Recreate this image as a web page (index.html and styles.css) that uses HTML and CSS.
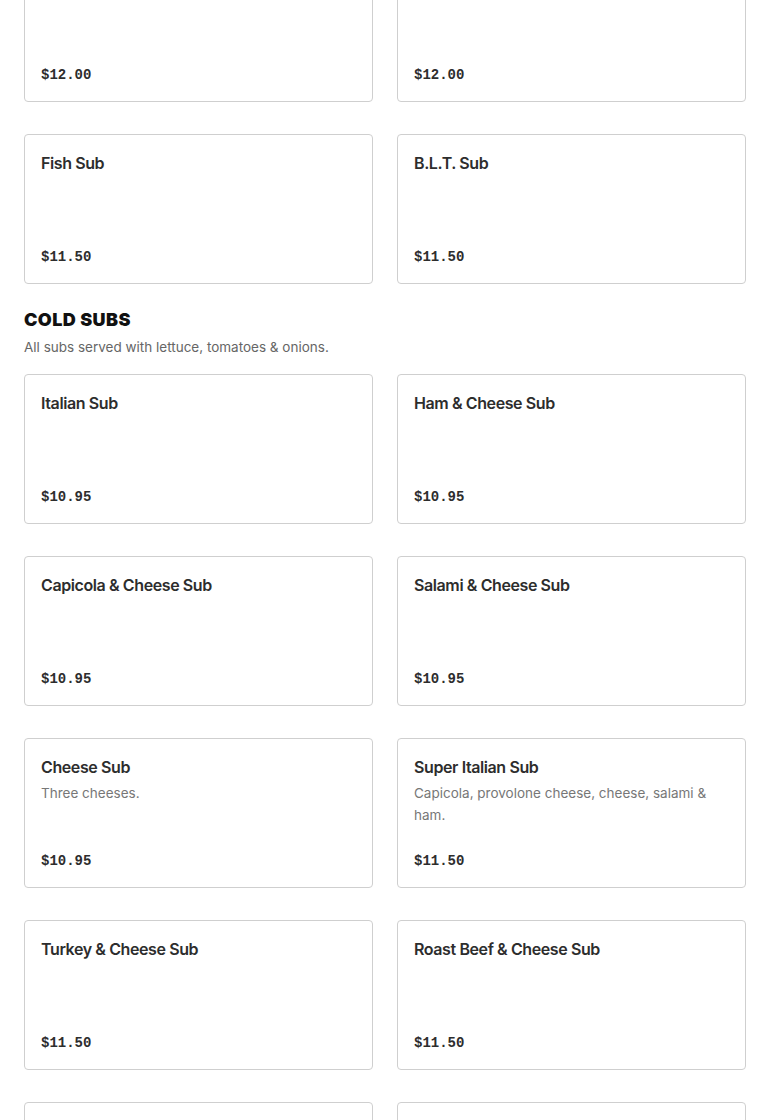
FILE: index.html
```html
<!DOCTYPE html>
<html>
<head>
<meta charset="utf-8">
<link rel="stylesheet" href="styles.css">
</head>
<body>
<div class="page">
  <div class="grid">
    <div class="card"><div class="name">Philly Steak Sub</div><div class="price">$12.00</div></div>
    <div class="card"><div class="name">Philly Chicken Sub</div><div class="price">$12.00</div></div>
    <div class="card"><div class="name">Fish Sub</div><div class="price">$11.50</div></div>
    <div class="card"><div class="name">B.L.T. Sub</div><div class="price">$11.50</div></div>
  </div>
  <h2 class="section-title">COLD SUBS</h2>
  <p class="section-sub">All subs served with lettuce, tomatoes &amp; onions.</p>
  <div class="grid">
    <div class="card"><div class="name">Italian Sub</div><div class="price">$10.95</div></div>
    <div class="card"><div class="name">Ham &amp; Cheese Sub</div><div class="price">$10.95</div></div>
    <div class="card"><div class="name">Capicola &amp; Cheese Sub</div><div class="price">$10.95</div></div>
    <div class="card"><div class="name">Salami &amp; Cheese Sub</div><div class="price">$10.95</div></div>
    <div class="card"><div class="name">Cheese Sub</div><div class="desc">Three cheeses.</div><div class="price">$10.95</div></div>
    <div class="card"><div class="name">Super Italian Sub</div><div class="desc">Capicola, provolone cheese, cheese, salami &amp; ham.</div><div class="price">$11.50</div></div>
    <div class="card"><div class="name">Turkey &amp; Cheese Sub</div><div class="price">$11.50</div></div>
    <div class="card"><div class="name">Roast Beef &amp; Cheese Sub</div><div class="price">$11.50</div></div>
    <div class="card"><div class="name">Tuna Sub</div><div class="price">$11.50</div></div>
    <div class="card"><div class="name">Chicken Salad Sub</div><div class="price">$11.50</div></div>
  </div>
</div>
</body>
</html>
```

FILE: styles.css
```css
html, body {
  margin: 0;
  padding: 0;
  background: #fff;
  overflow: hidden;
}
body {
  font-family: Inter, "Noto Sans", sans-serif;
  color: #2d2d2d;
}
.page {
  padding: 0 24px;
  margin-top: -48px;
}
.grid {
  display: grid;
  grid-template-columns: 1fr 1fr;
  column-gap: 24px;
  row-gap: 32px;
}
.card {
  border: 1px solid #cfcfcf;
  border-radius: 4px;
  padding: 16px 16px 15px;
  min-height: 117px;
  display: flex;
  flex-direction: column;
}
.name {
  font-size: 16px;
  line-height: 24px;
  font-weight: 600;
  color: #2d2d2d;
  letter-spacing: -0.4px;
}
.desc {
  margin-top: 3px;
  font-size: 13.5px;
  line-height: 22px;
  color: #777;
}
.price {
  margin-top: auto;
  font-family: "Liberation Mono", monospace;
  font-weight: bold;
  font-size: 14px;
  line-height: 22px;
  color: #2d2d2d;
}
.section-title {
  margin: 25px 0 0;
  font-size: 18px;
  line-height: 22px;
  font-weight: 900;
  color: #111;
  letter-spacing: 0.4px;
}
.section-sub {
  margin: 6px 0 17px;
  font-size: 13.5px;
  line-height: 20px;
  color: #666;
}
```
